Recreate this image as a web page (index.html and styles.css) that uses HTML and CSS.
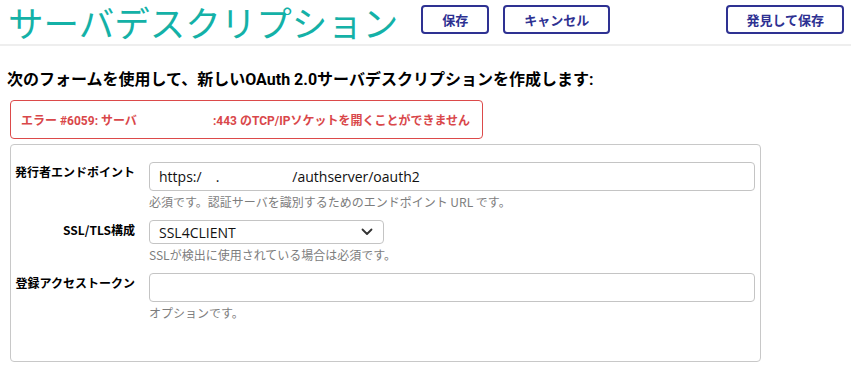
FILE: index.html
```html
<!DOCTYPE html>
<html lang="ja">
<head>
<meta charset="utf-8">
<link rel="stylesheet" href="styles.css">
</head>
<body>
<header class="topbar">
  <h1 class="title">サーバデスクリプション</h1>
  <button class="btn">保存</button>
  <button class="btn">キャンセル</button>
  <button class="btn btn-right">発見して保存</button>
</header>
<main class="content">
  <h2 class="lead">次のフォームを使用して、新しいOAuth 2.0サーバデスクリプションを作成します:</h2>
  <div class="error">エラー #6059: サーバ<span class="redact"></span>:443 のTCP/IPソケットを開くことができません</div>
  <section class="panel">
    <div class="row">
      <label class="label">発行者エンドポイント</label>
      <div class="field">
        <div class="input"><span>https:/</span><span class="gap1"></span><span>.</span><span class="gap2"></span><span>/authserver/oauth2</span></div>
        <div class="help">必須です。認証サーバを識別するためのエンドポイント URL です。</div>
      </div>
    </div>
    <div class="row">
      <label class="label">SSL/TLS構成</label>
      <div class="field">
        <div class="select"><span>SSL4CLIENT</span>
          <svg class="chev" width="12" height="8" viewBox="0 0 12 8"><path d="M1.5 1.5 L6 6 L10.5 1.5" fill="none" stroke="#333" stroke-width="1.8" stroke-linecap="round" stroke-linejoin="round"/></svg>
        </div>
        <div class="help">SSLが検出に使用されている場合は必須です。</div>
      </div>
    </div>
    <div class="row">
      <label class="label">登録アクセストークン</label>
      <div class="field">
        <div class="input"></div>
        <div class="help">オプションです。</div>
      </div>
    </div>
  </section>
</main>
</body>
</html>
```
FILE: styles.css
```css
* { box-sizing: border-box; }
body {
  margin: 0;
  font-family: Roboto, "Noto Sans CJK JP", sans-serif;
  color: #000;
  background: #fff;
}
.topbar {
  display: flex;
  align-items: center;
  height: 46px;
  padding: 0 7px 0 8px;
  border-bottom: 2px solid #eeeeee;
}
.title {
  flex: none;
  margin: 0 15px 0 0;
  padding-right: 8px;
  font-family: "Noto Sans CJK JP", sans-serif;
  font-weight: 400;
  font-size: 35.5px;
  line-height: 44px;
  color: #14b1a7;
  white-space: nowrap;
}
.btn {
  flex: none;
  height: 29px;
  padding: 0 19px;
  margin-right: 14px;
  border: 2px solid #2e3192;
  border-radius: 4px;
  background: #fff;
  color: #2e3192;
  font-family: "Noto Sans CJK JP", sans-serif;
  font-weight: 700;
  font-size: 13px;
  position: relative;
  top: -3px;
}
.btn-right { margin-left: auto; margin-right: 0; padding: 0 18px; }
.content { padding: 0 0 0 7px; }
.lead {
  margin: 23px 0 9px 0;
  font-size: 16px;
  font-weight: 700;
  line-height: 22px;
}
.error {
  width: 473px;
  height: 39px;
  margin-left: 3px;
  padding: 0 0 0 10px;
  display: flex;
  align-items: center;
  border: 1px solid #dc4a4a;
  border-radius: 4px;
  color: #d9474a;
  font-size: 12px;
  font-weight: 700;
}
.redact { display: inline-block; width: 76px; }
.panel {
  width: 751px;
  height: 218px;
  margin: 5px 0 0 3px;
  padding: 17px 5px 0 0;
  border: 1px solid #c8c8c8;
  border-radius: 4px;
}
.row {
  display: flex;
  align-items: flex-start;
  margin-bottom: 10px;
}
.label {
  width: 124px;
  flex: none;
  text-align: right;
  font-size: 12px;
  font-weight: 700;
  padding-top: 1px;
  margin-right: 14px;
  font-family: "Noto Sans CJK JP", sans-serif;
  line-height: 18px;
}
.field { flex: 1; }
.input {
  height: 29px;
  border: 1px solid #c4c4c4;
  border-radius: 4px;
  display: flex;
  align-items: center;
  padding: 0 9px;
  font-family: "Open Sans", "Noto Sans CJK JP", sans-serif;
  font-size: 14px;
  color: #111;
}
.gap1 { display: inline-block; width: 14px; }
.gap2 { display: inline-block; width: 73px; }
.select {
  width: 235px;
  height: 24px;
  border: 1px solid #c4c4c4;
  border-radius: 4px;
  display: flex;
  align-items: center;
  justify-content: space-between;
  padding: 0 10px 0 9px;
  font-family: "Open Sans", sans-serif;
  font-size: 14px;
  color: #111;
}
.help {
  margin-top: 2px;
  font-size: 12px;
  line-height: 17px;
  color: #7d7d7d;
  font-family: "Noto Sans CJK JP", sans-serif;
}
```
